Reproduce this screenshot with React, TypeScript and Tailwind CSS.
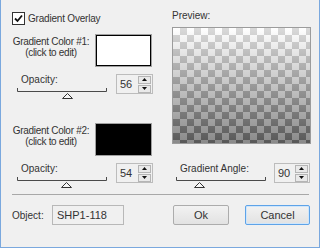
import React from 'react';

const FONT = "font-['Liberation_Sans',Arial,sans-serif]";

interface SliderProps {
  label: string;
  value: number;
  max: number;
}

// track with end ticks and an outlined thumb under it
const Slider: React.FC<SliderProps> = ({ label, value, max }) => {
  const x = Math.round((value / max) * 88) + 1;
  return (
    <div className="w-[90px] flex flex-col">
      <span className="pl-[4px] leading-[11px] whitespace-nowrap">{label}</span>
      <svg width="90" height="11" className="mt-[3px] overflow-visible">
        <path d="M0.5 0v3.5h89v-3.5" stroke="#4a4a4a" fill="none" />
        <path d={`M${x + 0.5} 5.5l5 5h-10z`} stroke="#333" fill="#f7f7f7" />
      </svg>
    </div>
  );
};

const Spin: React.FC<{ value: number; wide?: boolean }> = ({ value, wide }) => (
  <div
    className={
      (wide ? 'w-[37px]' : 'w-[36px]') +
      ' h-[20px] border border-[#bcbcbc] bg-[#f0f0f0] flex items-center pl-[3px] pr-[1px]'
    }
  >
    <span className="flex-1 text-[11px] leading-none text-[#333]">{value}</span>
    <div className="flex flex-col gap-[1px]">
      <div className="w-[13px] h-[8px] border border-[#b5b5b5] bg-[#e9e9e9] flex items-center justify-center">
        <svg width="5" height="3">
          <path d="M2.5 0L5 3H0z" fill="#111" />
        </svg>
      </div>
      <div className="w-[13px] h-[8px] border border-[#b5b5b5] bg-[#e9e9e9] flex items-center justify-center">
        <svg width="5" height="3">
          <path d="M0 0h5L2.5 3z" fill="#111" />
        </svg>
      </div>
    </div>
  </div>
);

const ColorRow: React.FC<{ n: number; color: string }> = ({ n, color }) => (
  <div className="flex items-start h-[33px]">
    <div className="w-[78px] pt-[2px] flex flex-col items-center leading-[11px] whitespace-nowrap tracking-[-0.3px]">
      <span>Gradient Color #{n}:</span>
      <span>(click to edit)</span>
    </div>
    <div className="ml-[5px] w-[57px] h-[33px] border border-[#a0a0a0]">
      <div className={'w-full h-full border border-black ' + color} />
    </div>
  </div>
);

export default function App() {
  return (
    <div
      className={
        FONT +
        ' w-[320px] h-[248px] bg-[#f0f0f0] border-x border-b border-[#7aa8de] text-[10px] text-[#333] flex flex-col'
      }
    >
      <div className="flex pl-[11px] pt-[12px] h-[194px]">
        {/* left column */}
        <div className="w-[141px] flex flex-col">
          <div className="flex items-center h-[13px]">
            <div className="w-[13px] h-[13px] border border-[#333] bg-white flex items-center justify-center">
              <svg width="9" height="9" viewBox="0 0 9 9">
                <path d="M1 4.5l2.5 2.5L8 1.5" stroke="#111" strokeWidth="1.8" fill="none" />
              </svg>
            </div>
            <span className="ml-[3px] leading-[11px] whitespace-nowrap tracking-[-0.2px]">Gradient Overlay</span>
          </div>

          <div className="mt-[9px]">
            <ColorRow n={1} color="bg-white" />
          </div>
          <div className="mt-[7px] flex items-start h-[20px]">
            <div className="ml-[5px]">
              <Slider label="Opacity:" value={56} max={100} />
            </div>
            <div className="ml-auto">
              <Spin value={56} wide />
            </div>
          </div>

          <div className="mt-[29px]">
            <ColorRow n={2} color="bg-black" />
          </div>
          <div className="mt-[7px] flex items-start h-[20px]">
            <div className="ml-[5px]">
              <Slider label="Opacity:" value={54} max={100} />
            </div>
            <div className="ml-auto">
              <Spin value={54} wide />
            </div>
          </div>
        </div>

        {/* right column */}
        <div className="ml-[19px] w-[139px] flex flex-col -mt-[2px]">
          <span className="leading-[11px]">Preview:</span>
          <div className="mt-[6px] w-[139px] h-[117px] border border-[#9c9c9c] [background-image:linear-gradient(rgba(255,255,255,0.6),rgba(0,0,0,0.46)),repeating-conic-gradient(#a2a2a2_0_25%,#ffffff_0_50%)] [background-size:100%_100%,14px_14px]" />
          <div className="mt-[19px] flex items-start h-[20px]">
            <div className="ml-[4px]">
              <Slider label="Gradient Angle:" value={90} max={360} />
            </div>
            <div className="ml-auto mr-[1px]">
              <Spin value={90} />
            </div>
          </div>
        </div>
      </div>

      <div className="ml-[11px] w-[297px] h-px bg-[#a8a8a8]" />

      <div className="mt-[10px] flex items-center pl-[11px] h-[20px]">
        <span className="w-[40px]">Object:</span>
        <div className="w-[72px] h-[20px] border border-[#b8b8b8] bg-[#f0f0f0] flex items-center pl-[4px] text-[11px]">
          SHP1-118
        </div>
        <button className="ml-[49px] w-[56px] h-[20px] border border-[#acacac] rounded-[2px] bg-[linear-gradient(#f2f2f2,#e2e2e2)] text-[11px] text-[#333]">
          Ok
        </button>
        <button className="ml-[16px] w-[65px] h-[20px] border border-[#5ea3e8] rounded-[2px] bg-[linear-gradient(#f2f2f2,#e2e2e2)] text-[11px] text-[#333] shadow-[inset_0_0_0_1px_#cfe6fb]">
          Cancel
        </button>
      </div>
    </div>
  );
}
